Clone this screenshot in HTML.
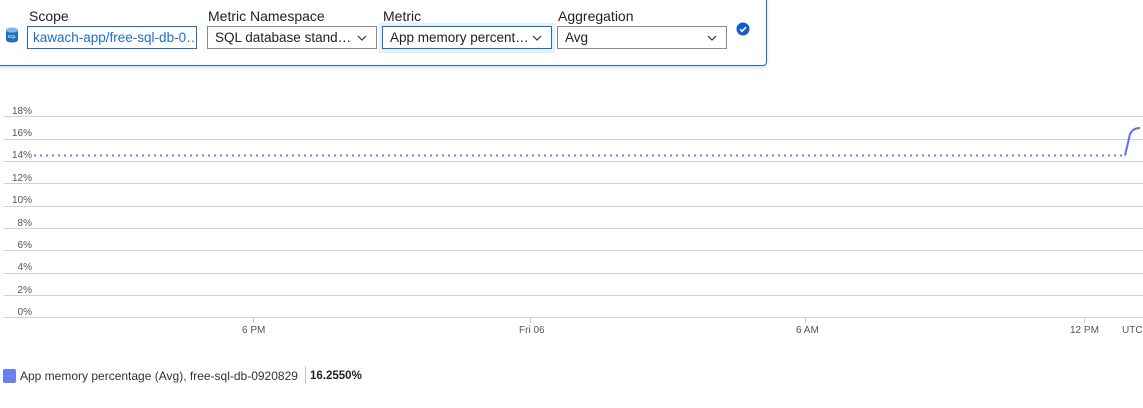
<!DOCTYPE html>
<html><head><style>
body{margin:0;width:1143px;height:408px;background:#fff;font-family:"Liberation Sans",sans-serif;position:relative;overflow:hidden}
.panel{position:absolute;left:-10px;top:-10px;width:775px;height:74px;border:1px solid #1a6fc9;border-radius:4px;box-shadow:0 2px 4px rgba(0,0,0,.15);background:#fff}
.lbl{position:absolute;top:8px;font-size:14px;color:#222}
.box{position:absolute;top:26px;height:23px;box-sizing:border-box;border:1px solid #8a8a8a;font-size:13.5px;color:#222;padding:3px 7px;white-space:nowrap;overflow:hidden;background:#fff}
.chev{position:absolute;right:8px;top:5px}
.yl{position:absolute;left:0;width:32px;text-align:right;font-size:10px;color:#555}
.gl{position:absolute;left:4px;right:0;height:1px;background:#d2d2d2}
.xl{position:absolute;top:325px;font-size:10px;color:#555}
.tk{position:absolute;top:318px;width:1px;height:5px;background:#ccc}
</style></head><body>
<div class="panel"></div>
<svg style="position:absolute;left:5px;top:27px" width="14" height="16" viewBox="0 0 14 16"><ellipse cx="7" cy="3" rx="6" ry="2.5" fill="#7fb8e6"/><path d="M1 3v10c0 1.4 2.7 2.5 6 2.5s6-1.1 6-2.5V3c0 1.4-2.7 2.5-6 2.5S1 4.4 1 3z" fill="#1d6fc0"/><text x="7" y="11" font-size="4.5" fill="#fff" text-anchor="middle" font-family="Liberation Sans">SQL</text></svg>
<div class="lbl" style="left:29px">Scope</div>
<div class="box" style="left:27px;width:170px;border-color:#1a6fc9;color:#1a6fc9;padding-left:5px">kawach-app/free-sql-db-0…</div>
<div class="lbl" style="left:208px">Metric Namespace</div>
<div class="box" style="left:207px;width:170px">SQL database stand…<svg class="chev" width="12" height="12"><path d="M2 4l4 4 4-4" stroke="#333" fill="none" stroke-width="1.2"/></svg></div>
<div class="lbl" style="left:383px">Metric</div>
<div style="position:absolute;left:379px;top:23px;width:176px;height:30px;background:#e6f0fa"></div>
<div class="box" style="left:382px;width:170px;border-color:#1a6fc9">App memory percent…<svg class="chev" width="12" height="12"><path d="M2 4l4 4 4-4" stroke="#333" fill="none" stroke-width="1.2"/></svg></div>
<div class="lbl" style="left:558px">Aggregation</div>
<div class="box" style="left:557px;width:170px">Avg<svg class="chev" width="12" height="12"><path d="M2 4l4 4 4-4" stroke="#333" fill="none" stroke-width="1.2"/></svg></div>
<svg style="position:absolute;left:736px;top:22px" width="14" height="14"><circle cx="7" cy="7" r="6.5" fill="#0f5ec9"/><path d="M4 7.2l2 2 4-4" stroke="#fff" stroke-width="1.6" fill="none"/></svg>

<div class="gl" style="top:116px"></div><div class="yl" style="top:106px">18%</div>
<div class="gl" style="top:139px"></div><div class="yl" style="top:128px">16%</div>
<div class="gl" style="top:161px"></div><div class="yl" style="top:150px">14%</div>
<div class="gl" style="top:183px"></div><div class="yl" style="top:173px">12%</div>
<div class="gl" style="top:206px"></div><div class="yl" style="top:195px">10%</div>
<div class="gl" style="top:228px"></div><div class="yl" style="top:218px">8%</div>
<div class="gl" style="top:250px"></div><div class="yl" style="top:240px">6%</div>
<div class="gl" style="top:273px"></div><div class="yl" style="top:262px">4%</div>
<div class="gl" style="top:295px"></div><div class="yl" style="top:285px">2%</div>
<div class="gl" style="top:317px"></div><div class="yl" style="top:307px">0%</div>
<svg style="position:absolute;left:0;top:0" width="1143" height="408"><path d="M34 155.5H1125" stroke="#6b7ff0" stroke-width="2" stroke-dasharray="2 4"/><path d="M1125 155.5L1130 134Q1133 128 1140 128" stroke="#5b70ee" stroke-width="2" fill="none"/></svg>
<div class="tk" style="left:253px"></div><div class="xl" style="left:242px">6 PM</div>
<div class="tk" style="left:530px"></div><div class="xl" style="left:519px">Fri 06</div>
<div class="tk" style="left:805px"></div><div class="xl" style="left:796px">6 AM</div>
<div class="tk" style="left:1084px"></div><div class="xl" style="left:1070px">12 PM</div>
<div class="xl" style="left:1122px">UTC+</div>
<div style="position:absolute;left:3px;top:369px;width:13px;height:14px;background:#6b7ff0;border-radius:2px"></div>
<div style="position:absolute;left:20px;top:369px;font-size:12px;color:#333">App memory percentage (Avg), free-sql-db-0920829</div>
<div style="position:absolute;left:305px;top:366px;width:1px;height:18px;background:#ccc"></div>
<div style="position:absolute;left:310px;top:370px;font-size:11.5px;font-weight:bold;color:#222">16.2550%</div>
</body></html>
